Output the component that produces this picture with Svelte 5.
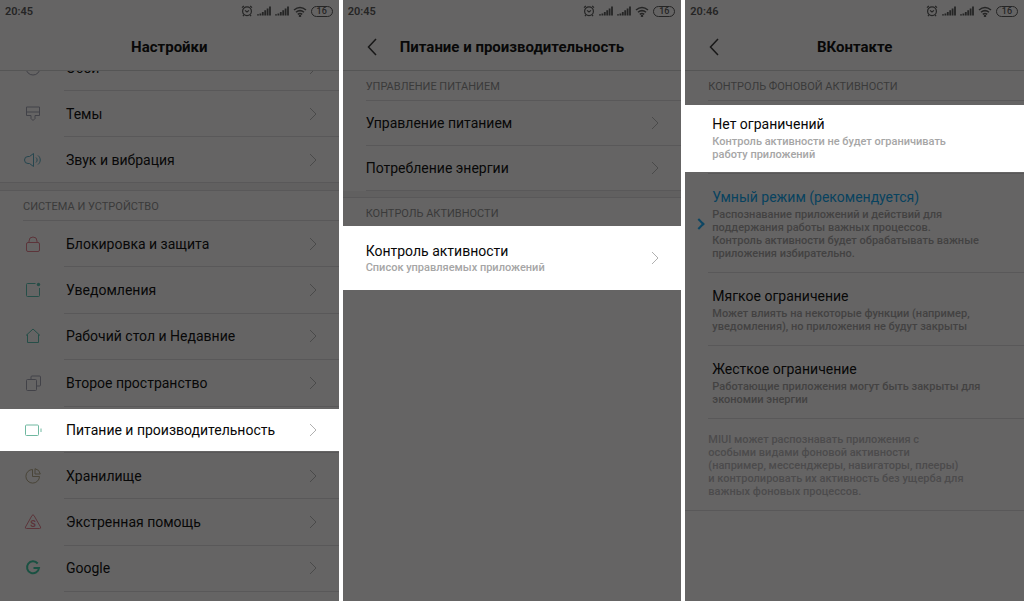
<script>
  let mode = 'smart';

  const displayRows = [
    { icon: 'brush', title: 'Темы' },
    { icon: 'sound', title: 'Звук и вибрация' },
  ];

  const systemRows = [
    { icon: 'lock', title: 'Блокировка и защита' },
    { icon: 'notify', title: 'Уведомления' },
    { icon: 'home', title: 'Рабочий стол и Недавние' },
    { icon: 'copy', title: 'Второе пространство' },
    { icon: 'battery', title: 'Питание и производительность', active: true },
    { icon: 'storage', title: 'Хранилище' },
    { icon: 'sos', title: 'Экстренная помощь' },
    { icon: 'google', title: 'Google' },
  ];

  const powerRows = ['Управление питанием', 'Потребление энергии'];

  const modes = [
    {
      id: 'none',
      title: 'Нет ограничений',
      lines: ['Контроль активности не будет ограничивать', 'работу приложений'],
      active: true,
    },
    {
      id: 'smart',
      title: 'Умный режим (рекомендуется)',
      lines: [
        'Распознавание приложений и действий для',
        'поддержания работы важных процессов.',
        'Контроль активности будет обрабатывать важные',
        'приложения избирательно.',
      ],
    },
    {
      id: 'soft',
      title: 'Мягкое ограничение',
      lines: ['Может влиять на некоторые функции (например,', 'уведомления), но приложения не будут закрыты'],
    },
    {
      id: 'hard',
      title: 'Жесткое ограничение',
      lines: ['Работающие приложения могут быть закрыты для', 'экономии энергии'],
    },
  ];

  const note = [
    'MIUI может распознавать приложения с',
    'особыми видами фоновой активности',
    '(например, мессенджеры, навигаторы, плееры)',
    'и контролировать их активность без ущерба для',
    'важных фоновых процессов.',
  ];
</script>

{#snippet statusBar(time)}
  <div class="status">
    <span class="time">{time}</span>
    <svg class="alarm" width="12" height="12" viewBox="0 0 12 12">
      <circle cx="6" cy="6.3" r="4.4" />
      <path d="M1 2.6 2.8 1M11 2.6 9.2 1M4 5.4 6 7l2-1.6M2.8 10 2 11.2M9.2 10l.8 1.2" />
    </svg>
    {#each [1, 2] as sim (sim)}
      <svg class="signal" width="14" height="10" viewBox="0 0 14 10">
        <path d="M1 9.5V8.3M3.4 9.5V7.4M5.8 9.5V6M8.2 9.5V4.2M10.6 9.5V2.4M13 9.5V.5" />
      </svg>
    {/each}
    <svg class="wifi" width="14" height="11" viewBox="0 0 14 11">
      <path d="M1 4Q7-1 13 4M3 6.3q4-3.4 8 0M4.8 8.4q2.200-1.800 4.400 0" />
      <circle cx="7" cy="9.900" r=".5" />
    </svg>
    <span class="charge">16</span>
  </div>
{/snippet}

{#snippet header(title, back)}
  <header>
    {#if back}
      <button class="back" aria-label="Назад">
        <svg width="10" height="18" viewBox="0 0 10 18"><path d="M9 1 1.500 9 9 17" /></svg>
      </button>
    {/if}
    <h1>{title}</h1>
  </header>
{/snippet}

{#snippet chevron()}
  <svg class="chevron" width="8" height="14" viewBox="0 0 8 14"><path d="M1 1 7 7l-6 6" /></svg>
{/snippet}

{#snippet icon(name)}
  <svg class="icon {name}" width="18" height="18" viewBox="0 0 18 18">
    {#if name === 'brush'}
      <path d="M2.500 2h13v8.500h-4.500v3l-2 2-2-2v-3H2.500zM2.500 7h13" />
    {:else if name === 'sound'}
      <path d="M9.500 2.500v13L5.500 12.500H4A3.500 3.500 0 0 1 4 5.500h1.500zM12 6.500c1.500 1.500 1.500 3.500 0 5M14 4.500c3 2.500 3 6.500 0 9" />
    {:else if name === 'lock'}
      <path d="M4 7.500h10q1.500 0 1.500 1.500v6q0 1.500-1.500 1.500H4q-1.500 0-1.500-1.500V9q0-1.500 1.500-1.500zM5 7.500V6a4 4 0 0 1 8 0v1.500" />
    {:else if name === 'notify'}
      <path d="M11.500 2.500H3.500q-1 0-1 1v11q0 1 1 1h11q1 0 1-1V7" />
      <circle class="dot" cx="14.500" cy="3.500" r="1.700" />
    {:else if name === 'home'}
      <path d="M2 8.500 9 2l7 6.500M3.500 7.500v8h11v-8" />
    {:else if name === 'copy'}
      <path d="M3.500 5.500h8q1 0 1 1v9q0 1-1 1h-8q-1 0-1-1v-9q0-1 1-1zM7 5V3q0-1 1-1h7.500q1 0 1 1v8q0 1-1 1H13" />
    {:else if name === 'battery'}
      <path d="M2.500 4h11q1 0 1 1v8.500q0 1-1 1h-11q-1 0-1-1V5q0-1 1-1zM17 7.500v3.500" />
    {:else if name === 'storage'}
      <path d="M8.500 2.500a6.800 6.800 0 1 0 7 7h-7zM11 1.700a6.500 6.500 0 0 1 5.300 5.300H11z" />
    {:else if name === 'sos'}
      <path d="M8 2.500q1-1.500 2 0l6.500 11.500q.7 1.500-1 1.500h-13q-1.700 0-1-1.500z" />
      <text x="9" y="13.500">S</text>
    {:else if name === 'google'}
      <path d="M13.700 4.500A6 6 0 1 0 15 9H9.500" />
    {:else if name === 'wallpaper'}
      <circle cx="9" cy="9" r="7" />
    {/if}
  </svg>
{/snippet}

{#snippet settingsRow(row)}
  <li>
    <button class="row" class:active={row.active}>
      {@render icon(row.icon)}
      <span class="title">{row.title}</span>
      {@render chevron()}
    </button>
  </li>
{/snippet}

<main>
  <section class="screen settings">
    {@render statusBar('20:45')}
    {@render header('Настройки', false)}
    <ul class="clipped">
      {@render settingsRow({ icon: 'wallpaper', title: 'Обои' })}
    </ul>
    <ul class="display">
      {#each displayRows as row (row.title)}
        {@render settingsRow(row)}
      {/each}
    </ul>
    <div class="gap"></div>
    <h2>СИСТЕМА И УСТРОЙСТВО</h2>
    <ul class="system">
      {#each systemRows as row (row.title)}
        {@render settingsRow(row)}
      {/each}
    </ul>
  </section>

  <section class="screen power">
    {@render statusBar('20:45')}
    {@render header('Питание и производительность', true)}
    <h2>УПРАВЛЕНИЕ ПИТАНИЕМ</h2>
    <ul>
      {#each powerRows as title (title)}
        <li>
          <button class="row">
            <span class="title">{title}</span>
            {@render chevron()}
          </button>
        </li>
      {/each}
    </ul>
    <div class="gap"></div>
    <h2 class="last">КОНТРОЛЬ АКТИВНОСТИ</h2>
    <button class="row control active">
      <span class="title">
        Контроль активности
        <small>Список управляемых приложений</small>
      </span>
      {@render chevron()}
    </button>
  </section>

  <section class="screen app">
    {@render statusBar('20:46')}
    {@render header('ВКонтакте', true)}
    <h2>КОНТРОЛЬ ФОНОВОЙ АКТИВНОСТИ</h2>
    <ul>
      {#each modes as item (item.id)}
        <li>
          <label class="mode" class:active={item.active} class:selected={mode === item.id}>
            <input type="radio" name="mode" value={item.id} bind:group={mode} />
            <span class="title">
              {item.title}
              <small>
                {#each item.lines as line}<span>{line}</span>{/each}
              </small>
            </span>
          </label>
        </li>
      {/each}
    </ul>
    <p class="note">
      {#each note as line}<span>{line}</span>{/each}
    </p>
  </section>
</main>

<style>
  :global(body) {
    background: #fff;
  }

  main {
    display: grid;
    grid-template-columns: repeat(3, minmax(0, 1fr));
    gap: 4px;
    min-height: 100vh;
    font-family: Roboto, "Noto Sans", sans-serif;
    color: #080808;
  }

  .screen {
    --line: #595859;
    display: flex;
    flex-direction: column;
    background: #656464;
  }

  .status {
    display: flex;
    align-items: center;
    gap: 4px;
    height: 22px;
    padding: 0 6px 0 5px;
    color: #252525;
  }

  .time {
    flex: 1;
    font-size: 11px;
    font-weight: 600;
  }

  .status svg {
    fill: none;
    stroke: currentColor;
  }

  .status .alarm {
    stroke-width: 1.2;
  }

  .status .signal {
    stroke-width: 1.8;
  }

  .status .wifi {
    stroke-width: 1.5;
  }

  .charge {
    width: 20px;
    border: 1px solid;
    border-radius: 6px;
    font-size: 9px;
    font-weight: 500;
    line-height: 9px;
    text-align: center;
  }

  header {
    display: grid;
    grid-template-columns: 48px 1fr 48px;
    align-items: center;
    height: 46px;
    padding-top: 2px;
    border-bottom: 1px solid #555;
  }

  h1 {
    grid-column: 2;
    margin: 0;
    font-size: 15px;
    font-weight: 700;
    text-align: center;
    white-space: nowrap;
  }

  button {
    border: 0;
    padding: 0;
    background: none;
    color: inherit;
    font: inherit;
    text-align: left;
  }

  .back {
    display: flex;
    padding-left: 24px;
  }

  .back svg {
    fill: none;
    stroke: #181818;
    stroke-width: 1.5;
  }

  h2 {
    height: 29px;
    margin: 0 0 0 23px;
    border-bottom: 1px solid var(--line);
    font-size: 11px;
    font-weight: 400;
    line-height: 31px;
    color: #3a3a3a;
  }

  ul {
    margin: 0;
    padding: 0;
    list-style: none;
  }

  li {
    display: flex;
    flex-direction: column;
  }

  li::after {
    content: "";
    height: 1px;
    margin-left: 23px;
    background: var(--line);
  }

  .settings li::after {
    margin-left: 64px;
  }

  .settings .display li:last-child::after {
    margin-left: 0;
  }

  .row {
    display: flex;
    flex: 1;
    align-items: center;
    min-height: 45px;
    padding: 0 22px 0 23px;
    font-size: 14px;
  }

  .title {
    flex: 1;
  }

  .active {
    background: #fff;
  }

  .chevron {
    fill: none;
    stroke: #4a4a4a;
  }

  .active .chevron {
    stroke: #b0b0b0;
  }

  .clipped {
    display: flex;
    flex-direction: column;
    justify-content: flex-end;
    height: 20px;
    overflow: hidden;
  }

  .gap {
    height: 6px;
    border-bottom: 1px solid var(--line);
    background: #616060;
  }

  .settings .gap {
    height: 7px;
  }

  .system {
    display: flex;
    flex: 1;
    flex-direction: column;
    padding-bottom: 9px;
  }

  .system li {
    flex: 1;
  }

  .system .row {
    min-height: 42px;
  }

  .system .active {
    margin: 2px 0 1px;
  }

  .icon {
    width: 20px;
    margin-right: 23px;
    fill: none;
    stroke: #424248;
  }

  .sound {
    stroke: #26464f;
  }

  .lock,
  .sos {
    stroke: #5c343a;
  }

  .notify,
  .home {
    stroke: #264e48;
  }

  .notify .dot {
    fill: #264e48;
    stroke: none;
  }

  .battery {
    stroke: #6fb8a0;
  }

  .storage {
    stroke: #4a4538;
  }

  .google {
    stroke: #1a5142;
    stroke-width: 2;
  }

  .sos text {
    fill: #5c343a;
    stroke: none;
    font-size: 9px;
    font-weight: 700;
    text-anchor: middle;
  }

  small {
    display: block;
    margin-top: 2px;
    font-size: 11px;
    font-weight: 500;
    line-height: 13px;
    color: #434242;
  }

  .active small {
    color: #a6a6a6;
  }

  small span,
  .note span {
    display: block;
    white-space: nowrap;
  }

  .power .row {
    min-height: 44px;
  }

  .power h2.last {
    height: 28px;
    border: 0;
  }

  .power .control {
    flex: none;
    min-height: 64px;
  }

  .mode {
    display: flex;
    align-items: center;
    padding: 14px 0 12px;
    font-size: 14px;
    line-height: 18px;
  }

  .mode.active {
    margin: 4px 0 1px;
    padding: 10px 0 11px;
  }

  .mode input {
    display: grid;
    place-items: center;
    width: 16px;
    height: 16px;
    margin: 0 5px 0 6px;
    appearance: none;
  }

  .mode input:checked::before {
    content: "";
    width: 6px;
    height: 6px;
    border: solid #0d4663;
    border-width: 2px 2px 0 0;
    rotate: 45deg;
  }

  .selected {
    color: #08425f;
  }

  .note {
    margin: 0;
    padding: 14px 0 12px 23px;
    border-bottom: 1px solid var(--line);
    font-size: 11px;
    font-weight: 500;
    line-height: 13px;
    color: #4c4b4c;
  }
</style>
